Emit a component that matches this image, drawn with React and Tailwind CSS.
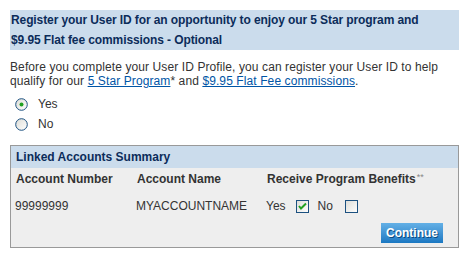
import React from "react";

function Radio({ checked }) {
  const id = checked ? "rg1" : "rg2";
  return (
    <svg width="13" height="13" viewBox="0 0 13 13" className="shrink-0">
      <defs>
        <linearGradient id={id} x1="0" y1="0" x2="1" y2="1">
          <stop offset="0" stopColor="#dcdcd6" />
          <stop offset="1" stopColor="#ffffff" />
        </linearGradient>
      </defs>
      <circle cx="6.5" cy="6.5" r="5.8" fill={`url(#${id})`} stroke="#1c5180" strokeWidth="1" />
      {checked && <circle cx="6.5" cy="6.5" r="2" fill="#21a121" />}
    </svg>
  );
}

function Check({ checked }) {
  const id = checked ? "cg1" : "cg2";
  return (
    <svg width="13" height="13" viewBox="0 0 13 13" className="shrink-0 block">
      <defs>
        <linearGradient id={id} x1="0" y1="0" x2="1" y2="1">
          <stop offset="0" stopColor="#dcdcd7" />
          <stop offset="1" stopColor="#ffffff" />
        </linearGradient>
      </defs>
      <rect x="0.5" y="0.5" width="12" height="12" fill={`url(#${id})`} stroke="#1c5180" />
      {checked && <path d="M3 6 L5 8.5 L10 3.5" fill="none" stroke="#21a121" strokeWidth="2" />}
    </svg>
  );
}

export default function App() {
  return (
    <div className="w-[470px] h-[257px] bg-white pt-[10px] px-[10px] text-[#333] text-[12px]" style={{ fontFamily: '"Liberation Sans", Arial, sans-serif' }}>
      <div className="w-[449px] bg-[#cbdcec] text-[#0c2c5a] font-bold text-[12px] leading-[20px] pl-[1px] tracking-[-0.1px]">
        Register your User ID for an opportunity to enjoy our 5 Star program and<br />$9.95 Flat fee commissions - Optional
      </div>
      <p className="mt-[10px] leading-[14px] text-[12px] w-[449px] tracking-[0.1px] whitespace-nowrap">
        Before you complete your User ID Profile, you can register your User ID to help<br />qualify for our{" "}
        <a href="#" className="text-[#0055a6] underline">5 Star Program</a>* and{" "}
        <a href="#" className="text-[#0055a6] underline">$9.95 Flat Fee commissions</a>.
      </p>
      <div className="mt-[10px] pl-[5px] flex flex-col gap-[7px] text-[12px]">
        <label className="flex items-center gap-[10px] leading-[13px]"><Radio checked /> Yes</label>
        <label className="flex items-center gap-[10px] leading-[13px]"><Radio /> No</label>
      </div>
      <div className="mt-[14px] w-[449px] border border-[#999] bg-[#eeeeee]">
        <div className="h-[22px] bg-[#cbdcec] text-[#0c2c5a] font-bold text-[12px] leading-[22px] pl-[5px]">Linked Accounts Summary</div>
        <div className="grid grid-cols-[121px_130px_1fr] pl-[5px] pt-[4px] font-bold text-[12px] leading-[14px] text-[#333]">
          <div>Account Number</div>
          <div>Account Name</div>
          <div className="whitespace-nowrap">Receive Program Benefits<span className="relative top-[-3px] text-[9px] text-[#888] font-normal ml-[1px]">**</span></div>
        </div>
        <div className="grid grid-cols-[121px_130px_1fr] pl-[4px] pt-[12px] items-center leading-[14px] text-[12px]">
          <div>99999999</div>
          <div>MYACCOUNTNAME</div>
          <div className="flex items-center">
            <span>Yes</span>
            <span className="ml-[10px]"><Check checked /></span>
            <span className="ml-[9px]">No</span>
            <span className="ml-[12px]"><Check /></span>
          </div>
        </div>
        <div className="flex justify-end pr-[15px] pt-[10px] pb-[4px]">
          <button className="w-[62px] h-[20px] bg-gradient-to-b from-[#63b0e6] to-[#1a78c2] text-white font-bold text-[12px] leading-[20px]" style={{ textShadow: "1px 1px 0 #0a4a80" }}>Continue</button>
        </div>
      </div>
    </div>
  );
}
